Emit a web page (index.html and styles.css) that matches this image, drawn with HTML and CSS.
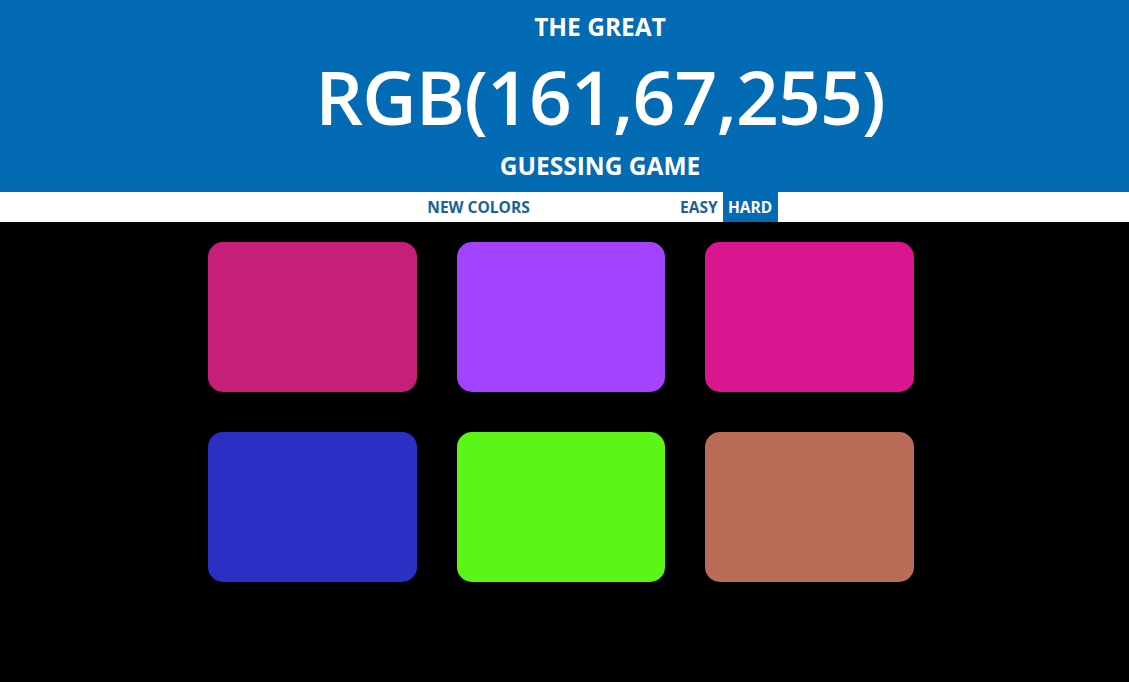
FILE: index.html
```html
<!DOCTYPE html>
<html>
<head>
<meta charset="utf-8">
<link rel="stylesheet" href="styles.css">
</head>
<body>
<header class="banner">
  <div class="line small">THE GREAT</div>
  <div class="line big">RGB(161,67,255)</div>
  <div class="line small">GUESSING GAME</div>
</header>
<nav class="bar">
  <button class="btn reset">NEW COLORS</button>
  <span class="msg"></span>
  <button class="btn mode">EASY</button>
  <button class="btn mode selected">HARD</button>
</nav>
<main class="board">
  <div class="square" style="background: rgb(198,31,121)"></div>
  <div class="square" style="background: rgb(161,67,255)"></div>
  <div class="square" style="background: rgb(217,22,144)"></div>
  <div class="square" style="background: rgb(44,47,195)"></div>
  <div class="square" style="background: rgb(91,245,23)"></div>
  <div class="square" style="background: rgb(186,108,88)"></div>
</main>
</body>
</html>
```
FILE: styles.css
```css
html, body {
  margin: 0;
  padding: 0;
  background: #000;
  font-family: "Open Sans", "Noto Sans", sans-serif;
  height: 100%;
  overflow: hidden;
}
.banner {
  background: #036ab4;
  color: #fff;
  height: 192px;
  box-sizing: border-box;
  padding: 10px 0 0 71px;
  text-align: center;
}
.line {
  font-weight: 700;
}
.small {
  font-size: 24.5px;
  line-height: 34px;
}
.big {
  font-size: 75px;
  font-weight: 600;
  line-height: 105px;
  letter-spacing: -0.9px;
}
.bar {
  background: #fff;
  height: 30px;
  display: flex;
  align-items: stretch;
  padding-left: 422px;
}
.btn {
  border: none;
  background: #fff;
  color: #17629c;
  font-family: inherit;
  font-weight: 700;
  font-size: 15.5px;
  padding: 0 5px;
  margin: 0;
  height: 30px;
  white-space: nowrap;
}
.reset {
  width: 113px;
}
.msg {
  width: 140px;
}
.mode.selected {
  background: #036ab4;
  color: #fff;
  width: 55px;
}
.board {
  display: grid;
  grid-template-columns: repeat(3, 208.5px);
  grid-auto-rows: 150px;
  column-gap: 40px;
  row-gap: 40px;
  padding: 20px 0 0 208px;
}
.square {
  border-radius: 15px;
}
```
